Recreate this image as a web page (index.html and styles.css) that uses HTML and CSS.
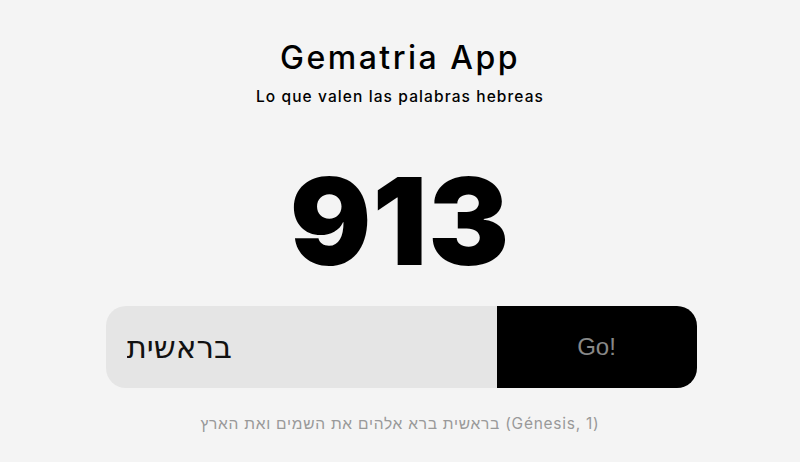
FILE: index.html
```html
<!DOCTYPE html>
<html lang="es">
<head>
<meta charset="utf-8">
<title>Gematria App</title>
<link rel="stylesheet" href="styles.css">
</head>
<body>
<main class="app">
  <header class="header">
    <h1 class="title">Gematria App</h1>
    <p class="subtitle">Lo que valen las palabras hebreas</p>
  </header>
  <div class="result">913</div>
  <form class="search">
    <input class="word" type="text" value="בראשית" dir="rtl">
    <button class="go" type="button">Go!</button>
  </form>
  <p class="example">בראשית ברא אלהים את השמים ואת הארץ (Génesis, 1)</p>
</main>
</body>
</html>
```
FILE: styles.css
```css
html, body {
  margin: 0;
  padding: 0;
  background: #f4f4f4;
}
body {
  font-family: "Inter", "Noto Sans", sans-serif;
  color: #000;
}
.app {
  width: 800px;
  height: 462px;
  display: flex;
  flex-direction: column;
  align-items: center;
}
.header {
  display: flex;
  flex-direction: column;
  align-items: center;
  padding-top: 38px;
}
.title {
  margin: 0;
  font-size: 32px;
  font-weight: 500;
  line-height: 40px;
  letter-spacing: 2.5px;
}
.subtitle {
  margin: 9px 0 0;
  font-size: 15.5px;
  font-weight: 500;
  line-height: 20px;
  letter-spacing: 1.1px;
}
.result {
  margin-top: 51px;
  font-size: 121px;
  font-weight: 900;
  line-height: 126px;
  letter-spacing: 1px;
}
.search {
  margin: 22px 0 0 2px;
  display: flex;
  width: 591px;
  height: 82px;
}
.word {
  flex: 0 0 391px;
  width: 391px;
  min-width: 0;
  box-sizing: border-box;
  border: none;
  outline: none;
  background: #e5e5e5;
  border-radius: 20px 0 0 20px;
  padding: 0 21px;
  font-family: "DejaVu Sans", sans-serif;
  font-size: 31px;
  color: #111;
  text-align: left;
}
.go {
  flex: 1 1 auto;
  min-width: 0;
  border: none;
  background: #000;
  color: #888;
  border-radius: 0 20px 20px 0;
  font-family: "Liberation Sans", Arial, sans-serif;
  font-size: 24px;
  padding: 0;
}
.example {
  margin: 26px 0 0;
  font-size: 15.5px;
  color: #999;
  letter-spacing: 0.75px;
}
```
